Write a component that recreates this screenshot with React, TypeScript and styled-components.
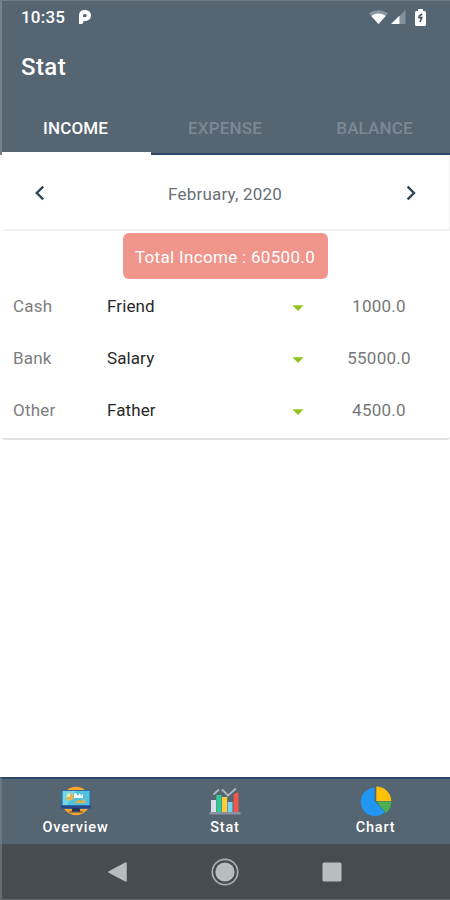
import React from "react";
import styled, { createGlobalStyle } from "styled-components";

const GlobalStyle = createGlobalStyle`
  * { box-sizing: border-box; }
  body { margin: 0; background: #fff; font-family: Roboto, "Liberation Sans", sans-serif; }
`;

const Screen = styled.div`
  width: 450px;
  height: 900px;
  display: flex;
  flex-direction: column;
  background: #fff;
  overflow: hidden;
`;

const Header = styled.header`
  height: 155px;
  background: #566572;
  color: #fff;
  border-left: 2px solid #75828c;
  border-top: 1px solid #707c87;
  display: flex;
  flex-direction: column;
`;

const StatusBar = styled.div`
  height: 32px;
  padding: 0 24px 0 19px;
  display: flex;
  align-items: center;
  justify-content: space-between;
`;

const StatusGroup = styled.div<{ $gap: number }>`
  display: flex;
  align-items: center;
  gap: ${(p) => p.$gap}px;
  svg { display: block; }
`;

const Clock = styled.span`
  font-size: 17px;
  font-weight: 500;
  line-height: 20px;
  letter-spacing: 0.2px;
`;

const Title = styled.h1`
  margin: 0;
  height: 67px;
  padding-left: 19px;
  line-height: 69px;
  font-size: 24px;
  font-weight: 500;
  letter-spacing: 0.4px;
`;

const Tabs = styled.nav`
  flex: 1;
  display: grid;
  grid-template-columns: 149px 150px 149px;
`;

const Tab = styled.div<{ $active?: boolean }>`
  display: flex;
  justify-content: center;
  padding: 17px 2px 0 0;
  line-height: 22px;
  font-size: 17px;
  font-weight: 500;
  letter-spacing: 0.15px;
  color: ${(p) => (p.$active ? "#fff" : "#7b8996")};
  border-bottom: ${(p) => (p.$active ? "3px solid #fff" : "2px solid #2d4767")};
`;

const MonthBar = styled.div`
  height: 76px;
  margin-left: 3px;
  padding: 0 28px 0 27px;
  display: flex;
  align-items: center;
  justify-content: space-between;
  border-bottom: 2px solid #f0f0f0;
  border-right: 1px solid #f2f2f2;
  svg { display: block; margin-top: 2px; }
`;

const Month = styled.span`
  font-size: 17px;
  letter-spacing: 0.2px;
  color: #697077;
  padding: 3px 1px 0 0;
`;

const Card = styled.section`
  height: 209px;
  margin-left: 2px;
  padding-top: 2px;
  border-bottom: 2px solid #e1e1e1;
  border-radius: 0 0 3px 3px;
  display: flex;
  flex-direction: column;
`;

const Total = styled.div`
  align-self: center;
  width: 205px;
  height: 46px;
  margin-right: 2px;
  border-radius: 6px;
  background: #f0958b;
  color: #fff;
  line-height: 48px;
  text-align: center;
  font-size: 17px;
  letter-spacing: 0.32px;
  white-space: nowrap;
`;

const Entry = styled.div`
  height: 52px;
  padding: 2px 0 0 11px;
  display: grid;
  grid-template-columns: 94px 185px 12px 150px;
  align-items: center;
  font-size: 17px;
  svg { display: block; margin-top: 3px; }
`;

const Account = styled.span`
  color: #7d7d7d;
  letter-spacing: 0.2px;
`;

const Category = styled.span`
  color: #282828;
  letter-spacing: 0.1px;
`;

const Amount = styled.span`
  color: #777;
  text-align: center;
  letter-spacing: 0.25px;
`;

const BottomNav = styled.nav`
  margin-top: auto;
  height: 67px;
  background: #566572;
  border-top: 2px solid #2d4767;
  border-left: 2px solid #6b7881;
  display: grid;
  grid-template-columns: 147px 152px 149px;
`;

const NavItem = styled.div`
  display: flex;
  flex-direction: column;
  align-items: center;
  padding-top: 7px;
  color: #fff;
  font-size: 14.5px;
  font-weight: 500;
  line-height: 19px;
  letter-spacing: 0.8px;
  svg { display: block; margin-bottom: 2px; }
`;

const SystemNav = styled.div`
  height: 56px;
  background: #454d52;
  border-left: 2px solid #646d70;
  border-bottom: 1px solid #61686c;
  padding: 0 107px 0 105px;
  display: flex;
  align-items: center;
  justify-content: space-between;
  svg { display: block; }
`;

const ParkingMark = () => (
  <svg width="14" height="16" viewBox="0 0 14 16">
    <path fillRule="evenodd" fill="#fff" d="M6.5 1C10.5 1 13 3.1 13 6.5S10.3 12 7 12H5.4v1.2A2 2 0 0 1 3.4 15H1V7C1 3 3.2 1 6.5 1Zm.2 4A1.8 1.8 0 0 0 5 6.8V8.1h1.7a1.6 1.6 0 1 0 0-3.1Z" />
  </svg>
);

const WifiIcon = () => (
  <svg width="19" height="14" viewBox="0 0 19 15" preserveAspectRatio="none">
    <path d="M0 3.5Q9.5-3 19 3.5L9.5 15Z" fill="#8b98a2" />
    <path d="M2.2 6.3Q9.5 1 16.8 6.3L9.5 15Z" fill="#fff" />
  </svg>
);

const SignalIcon = () => (
  <svg width="15" height="14" viewBox="0 0 16 15">
    <path d="M0 15 15.5 0V15Z" fill="#84919b" />
    <path d="M0 15 9 6.2V15Z" fill="#fff" />
  </svg>
);

const BatteryIcon = () => (
  <svg width="11" height="17" viewBox="0 0 11 17">
    <path d="M3 0h5v2h1.5Q11 2 11 3.5v12Q11 17 9.5 17h-8Q0 17 0 15.5v-12Q0 2 1.5 2H3Z" fill="#fff" />
    <path d="M7 5 4.2 7.2v1.5h2.5L5 13" fill="none" stroke="#46545f" strokeWidth="1.7" />
  </svg>
);

const BatterySlot = styled.div`
  padding-left: 6px;
`;

const Chevron = ({ left = false }: { left?: boolean }) => (
  <svg width="20" height="20" viewBox="0 0 20 20">
    <path d={left ? "M13.2 3.7 6.8 10l6.4 6.3" : "M6.6 3.7 13 10l-6.4 6.3"} fill="none" stroke="#304657" strokeWidth="2.4" />
  </svg>
);

const Caret = () => (
  <svg width="12" height="6" viewBox="0 0 12 6">
    <path d="M.5.2h11L6 6Z" fill="#8fc31b" />
  </svg>
);

const OverviewIcon = () => (
  <svg width="32" height="30" viewBox="0 0 32 30">
    <circle cx="16" cy="15" r="14.2" fill="#f7a62b" />
    <rect x="1" y="4" width="30" height="19" rx="1.5" fill="#3569a0" />
    <rect x="2.5" y="5" width="27" height="14.5" fill="#4fc2dc" />
    <path d="M3 5h13L7 19H3Z" fill="#75d7df" />
    <circle cx="10" cy="11" r="3.6" fill="#eeb24b" />
    <path d="M10 7v4H6.4A3.6 3.6 0 0 1 10 7Z" fill="#cdeeda" />
    <path d="M14 12V8l2-1 2 3 2-3 1 3 2-2v4Z" fill="#fff" />
    <path d="M14 17l4-3 3 1 4-2v4Z" fill="#e8af47" />
    <rect x="1" y="19.5" width="30" height="2.8" fill="#29468b" />
    <path d="M12.5 22h7l1 4h-9Z" fill="#263659" />
    <rect x="9" y="25.5" width="14" height="1.1" fill="#655b55" />
  </svg>
);

const StatIcon = () => (
  <svg width="32" height="30" viewBox="0 0 32 30">
    <rect x="2" y="14" width="5" height="12" fill="#dddde9" />
    <rect x="7.3" y="9" width="5.2" height="17" fill="#35c998" />
    <rect x="13" y="11" width="5.2" height="15" fill="#ffcb3c" />
    <rect x="18.7" y="16" width="4.8" height="10" fill="#73d5f2" />
    <path d="M24.5 8.5 29.5 6v20h-5Z" fill="#f1594b" />
    <rect x=".5" y="26" width="31" height="2.5" fill="#8994a0" />
    <path d="M4.5 8.5 10 3.5M13 3.5l6 6L27 2.5" fill="none" stroke="#aeb8c3" strokeWidth="1.8" />
  </svg>
);

const ChartIcon = () => (
  <svg width="32" height="30" viewBox="0 0 32 30">
    <path d="M14.5 1.5V15L25 26A14.3 14.3 0 1 1 14.5 1.5Z" fill="#2196f3" />
    <path d="M16.3.5A15 15 0 0 1 31.3 15h-15Z" fill="#ffc107" />
    <path d="M16.3 15.5h15A15 15 0 0 1 26 27Z" fill="#4caf50" />
  </svg>
);

const BackIcon = () => (
  <svg width="22" height="22" viewBox="0 0 22 22">
    <path d="M2 11 19 2V20Z" fill="#b7bdbd" stroke="#b7bdbd" strokeWidth="1.5" strokeLinejoin="round" />
  </svg>
);

const HomeIcon = () => (
  <svg width="28" height="28" viewBox="0 0 28 28">
    <circle cx="14" cy="14" r="12.7" fill="none" stroke="#abb1b2" strokeWidth="1.7" />
    <circle cx="14" cy="14" r="9.6" fill="#b8bebe" />
  </svg>
);

const RecentIcon = () => (
  <svg width="22" height="22" viewBox="0 0 22 22">
    <rect x="1.5" y="1.5" width="19" height="19" rx="1.5" fill="#b8bebe" />
  </svg>
);

const entries = [
  { account: "Cash", category: "Friend", amount: "1000.0" },
  { account: "Bank", category: "Salary", amount: "55000.0" },
  { account: "Other", category: "Father", amount: "4500.0" },
];

export default function App() {
  return (
    <>
      <GlobalStyle />
      <Screen>
        <Header>
          <StatusBar>
            <StatusGroup $gap={13}>
              <Clock>10:35</Clock>
              <ParkingMark />
            </StatusGroup>
            <StatusGroup $gap={3}>
              <WifiIcon />
              <SignalIcon />
              <BatterySlot>
                <BatteryIcon />
              </BatterySlot>
            </StatusGroup>
          </StatusBar>
          <Title>Stat</Title>
          <Tabs>
            <Tab $active>INCOME</Tab>
            <Tab>EXPENSE</Tab>
            <Tab>BALANCE</Tab>
          </Tabs>
        </Header>
        <MonthBar>
          <Chevron left />
          <Month>February, 2020</Month>
          <Chevron />
        </MonthBar>
        <Card>
          <Total>Total Income : 60500.0</Total>
          {entries.map((e) => (
            <Entry key={e.account}>
              <Account>{e.account}</Account>
              <Category>{e.category}</Category>
              <Caret />
              <Amount>{e.amount}</Amount>
            </Entry>
          ))}
        </Card>
        <BottomNav>
          <NavItem><OverviewIcon />Overview</NavItem>
          <NavItem><StatIcon />Stat</NavItem>
          <NavItem><ChartIcon />Chart</NavItem>
        </BottomNav>
        <SystemNav>
          <BackIcon />
          <HomeIcon />
          <RecentIcon />
        </SystemNav>
      </Screen>
    </>
  );
}
